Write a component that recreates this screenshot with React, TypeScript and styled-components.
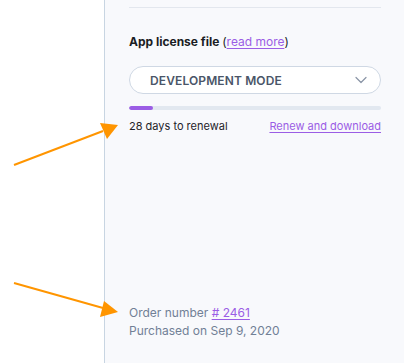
import styled, { createGlobalStyle } from 'styled-components';

const GlobalStyle = createGlobalStyle`
	html, body, #root {
		margin: 0;
		height: 100%;
	}
	body {
		font-family: Inter, 'Noto Sans', sans-serif;
		-webkit-font-smoothing: antialiased;
	}
`;

const PURPLE = '#9b5de5';

const App = () => {
	return (
		<>
			<GlobalStyle />
			<Page>
				<Gutter />
				<Panel>
					<Divider />
					<Section>
						<Title>
							App license file <Paren>(</Paren>
							<Link href="#">read more</Link>
							<Paren>)</Paren>
						</Title>
						<Select>
							<SelectLabel>DEVELOPMENT MODE</SelectLabel>
							<svg width="12" height="8" viewBox="0 0 12 8" fill="none">
								<path d="M1 1.5l5 5 5-5" stroke="#8a94a6" strokeWidth="1.2" strokeLinecap="round" strokeLinejoin="round" />
							</svg>
						</Select>
						<Track>
							<Fill style={{ width: `${(24 / 251) * 100}%` }} />
						</Track>
						<Row>
							<span>28 days to renewal</span>
							<Link href="#">Renew and download</Link>
						</Row>
					</Section>
					<Footer>
						<Meta>
							Order number <Link href="#"># 2461</Link>
						</Meta>
						<Meta>Purchased on Sep 9, 2020</Meta>
					</Footer>
				</Panel>
				<Arrows width="404" height="363" viewBox="0 0 404 363">
					<line x1="14" y1="165" x2="103" y2="131" stroke="#ff9500" strokeWidth="2" />
					<path d="M118 125L100 123L107 139z" fill="#ff9500" />
					<line x1="14" y1="283" x2="103" y2="308" stroke="#ff9500" strokeWidth="2" />
					<path d="M118 312L104 301L100 317z" fill="#ff9500" />
				</Arrows>
			</Page>
		</>
	);
};

export default App;

const Page = styled.div`
	position: relative;
	display: flex;
	width: 404px;
	height: 363px;
	background: #ffffff;
	overflow: hidden;
`;

const Gutter = styled.div`
	width: 104px;
	flex-shrink: 0;
	border-right: 1px solid #c8d5e2;
`;

const Panel = styled.div`
	flex: 1;
	display: flex;
	flex-direction: column;
	background: #f8f9fc;
	padding: 7px 23px 24px 24px;
	box-sizing: border-box;
`;

const Divider = styled.hr`
	margin: 0;
	border: none;
	border-top: 1px solid #e3e7ee;
`;

const Section = styled.div`
	display: flex;
	flex-direction: column;
	margin-top: 26px;
`;

const Title = styled.div`
	font-size: 12px;
	font-weight: 700;
	color: #1a1d24;
	line-height: 16px;
`;

const Paren = styled.span`
	font-weight: 400;
`;

const Link = styled.a`
	color: ${PURPLE};
	text-decoration: underline;
	text-underline-offset: 2px;
	font-weight: 400;
`;

const Select = styled.div`
	margin-top: 16px;
	height: 28px;
	box-sizing: border-box;
	border: 1px solid #cfd8e4;
	border-radius: 14px;
	background: #ffffff;
	display: flex;
	align-items: center;
	justify-content: space-between;
	padding: 0 13px 0 20px;
`;

const SelectLabel = styled.span`
	font-size: 12px;
	font-weight: 600;
	letter-spacing: 0.01em;
	color: #4a5568;
`;

const Track = styled.div`
	margin-top: 12px;
	height: 4px;
	border-radius: 2px;
	background: #e2e8f0;
	overflow: hidden;
`;

const Fill = styled.div`
	height: 100%;
	border-radius: 2px;
	background: ${PURPLE};
`;

const Row = styled.div`
	margin-top: 8px;
	display: flex;
	justify-content: space-between;
	font-size: 11px;
	line-height: 16px;
	color: #1f2329;
`;

const Footer = styled.div`
	margin-top: auto;
	display: flex;
	flex-direction: column;
	gap: 1px;
`;

const Meta = styled.div`
	font-size: 12px;
	line-height: 17px;
	color: #718096;
`;

const Arrows = styled.svg`
	position: absolute;
	top: 0;
	left: 0;
	pointer-events: none;
`;
